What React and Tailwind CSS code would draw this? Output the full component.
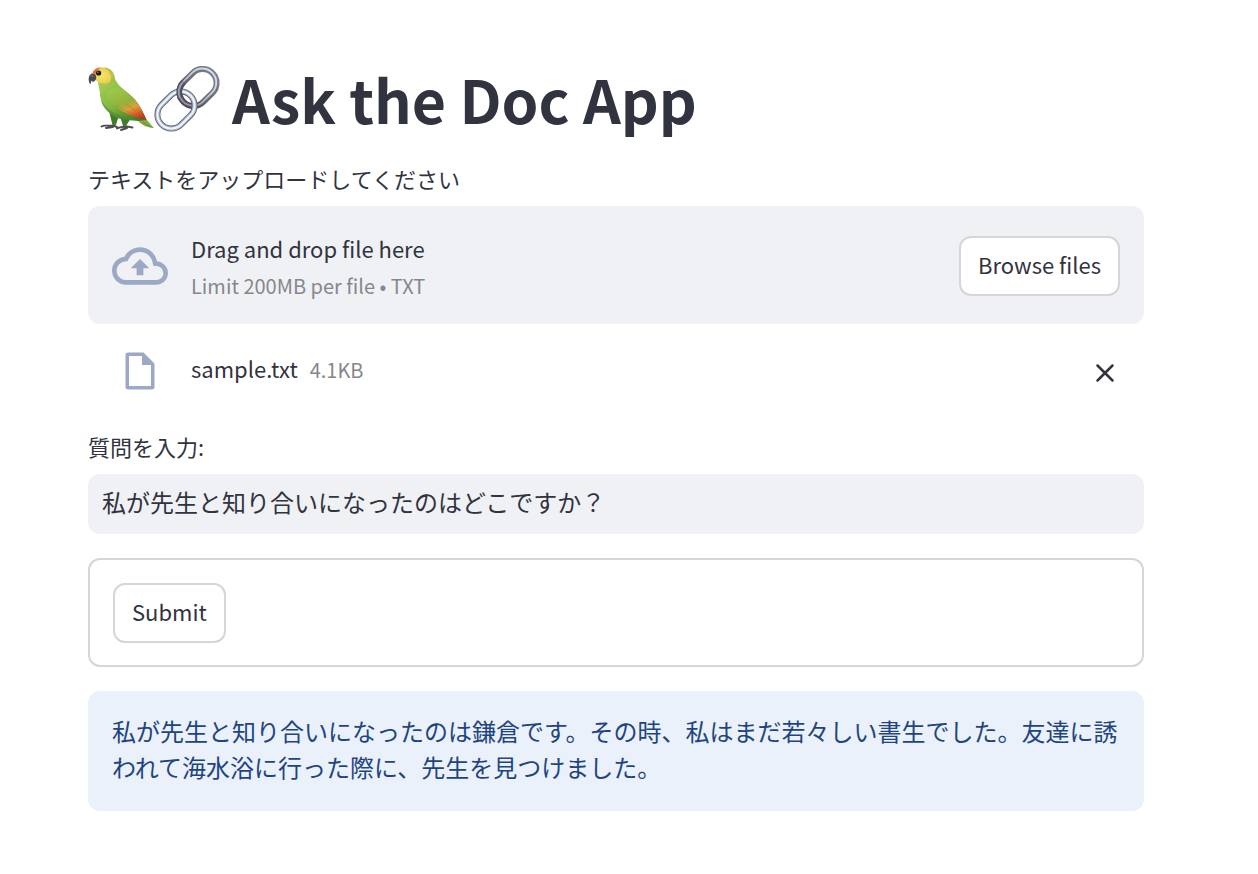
import { useRef, useState } from 'react'
import { MdOutlineCloudUpload } from 'react-icons/md'

const ANSWER =
  '私が先生と知り合いになったのは鎌倉です。その時、私はまだ若々しい書生でした。友達に誘われて海水浴に行った際に、先生を見つけました。'

function ParrotIcon() {
  return (
    <svg viewBox="0 0 66 66" className="size-[66px] shrink-0" aria-hidden="true">
      <defs>
        <linearGradient id="parrotBody" x1="0.1" y1="0.1" x2="0.8" y2="1">
          <stop offset="0" stopColor="#a5cd55" />
          <stop offset="0.5" stopColor="#80b840" />
          <stop offset="1" stopColor="#3f7a26" />
        </linearGradient>
        <linearGradient id="parrotWing" x1="0.2" y1="0" x2="0.75" y2="1">
          <stop offset="0" stopColor="#9acb4c" />
          <stop offset="0.45" stopColor="#93b23c" />
          <stop offset="0.66" stopColor="#d9a03a" />
          <stop offset="0.85" stopColor="#dc5a2a" />
          <stop offset="1" stopColor="#b03a1e" />
        </linearGradient>
        <radialGradient id="parrotHead" cx="0.45" cy="0.5" r="0.65">
          <stop offset="0" stopColor="#f6e36a" />
          <stop offset="0.7" stopColor="#e9d050" />
          <stop offset="1" stopColor="#b9bf42" />
        </radialGradient>
      </defs>
      {/* tail */}
      <path d="M49 50 L58 53 C61 56 63 59 66 62 C61 62 55 60 50 55 Z" fill="#86ad45" />
      <path d="M54 56 L63 61" stroke="#557f30" strokeWidth="0.7" />
      {/* legs */}
      <path
        d="M13.5 60.5 C16 58.5 20 60.5 25 59.5 L29 61 M18 62 L25 61 M29 62.5 C32 60.5 35 61 39 60.5 L44.5 61.5 M33 64 L39 62"
        fill="none"
        stroke="#4d4c50"
        strokeWidth="1.9"
        strokeLinecap="round"
      />
      <path d="M21 45 L31 49 L28 59 L24.5 59 Z M32 50 L43 52 L38 60 L35 60 Z" fill="#437c29" />
      {/* body */}
      <path
        d="M10 15 C10 20 12 23 12 29 C13 38 18 44 24 49 C31 54 40 53 50 55 L58.5 54 C54 43 50 36 43.5 30 C36 23 29 20 26 10 Z"
        fill="url(#parrotBody)"
      />
      <path d="M13 34 C18 43 25 48 38 51 C42 52 46 53 50 55 C40 54 31 55 24 49 C18 44 14 40 13 34 Z" fill="#4a8b2e" opacity="0.65" />
      <path
        d="M19 27 C24 20 34 21 42 29 C50 36 54 44 58.5 54 C45 51 33 46 26 39 C21 35 17 31 19 27 Z"
        fill="url(#parrotWing)"
      />
      <path d="M28 39 C37 46 46 49 55 51.5 M38 38 C44 42 50 47 55 51" fill="none" stroke="#b04f22" strokeWidth="0.7" opacity="0.45" />
      {/* head */}
      <path d="M4 8 C6 3 11 1 16 1.5 C22 2 26 6 26 12 C24 17 18 19 12 17 L7 14 Z" fill="url(#parrotHead)" />
      <path d="M16 1.5 C23 2 27 6 27 14 C25 18 22 19 21 18 C25 12 23 5 16 1.5 Z" fill="#a6b945" opacity="0.7" />
      <path d="M4.5 7 C5.5 3.5 9 1.5 13 1.5 C10 3 8.5 5 8 8 Z" fill="#e46a3c" />
      {/* beak */}
      <path d="M3.5 7.5 C7 7 8.5 9 8.2 12 C8 14 6.5 15.5 5 16 L3.5 14.5 L2.3 18.5 C0 15 0 9.5 3.5 7.5 Z" fill="#4a4b50" />
      <path d="M2.5 10 C3.5 9 5 9 5 11" fill="none" stroke="#85878c" strokeWidth="0.9" />
      <circle cx="10.6" cy="7" r="2.6" fill="#1c1714" />
      <circle cx="9.9" cy="6.2" r="0.6" fill="#d8d4c8" />
    </svg>
  )
}

function LinkIcon() {
  return (
    <svg viewBox="0 0 66 66" className="size-[66px] shrink-0" aria-hidden="true">
      <defs>
        <linearGradient id="ringDark" x1="0" y1="0" x2="1" y2="0">
          <stop offset="0" stopColor="#54474d" />
          <stop offset="0.5" stopColor="#6d6970" />
          <stop offset="1" stopColor="#7b7f8a" />
        </linearGradient>
        <linearGradient id="ringLight" x1="0" y1="0" x2="1" y2="0">
          <stop offset="0" stopColor="#8396b5" />
          <stop offset="0.5" stopColor="#b0c0d6" />
          <stop offset="1" stopColor="#d5e0ee" />
        </linearGradient>
      </defs>
      {/* upper ring */}
      <g transform="rotate(-45 44 21.5)" fill="none">
        <rect x="23.5" y="7.5" width="41" height="28" rx="14" stroke="url(#ringDark)" strokeWidth="6" />
        <rect x="23.5" y="7" width="41" height="28" rx="14" stroke="url(#ringLight)" strokeWidth="2" />
      </g>
      {/* lower ring */}
      <g transform="rotate(-45 22 44)" fill="none">
        <rect x="1.5" y="30" width="41" height="28" rx="14" stroke="#6b6168" strokeWidth="6" />
        <rect x="1.5" y="30" width="41" height="28" rx="14" stroke="#a3b6d0" strokeWidth="4.2" />
        <rect x="1.5" y="30" width="41" height="28" rx="14" stroke="#f1f6fc" strokeWidth="2" />
      </g>
      {/* the upper ring crosses in front here */}
      <path d="M29.5 16.2 A14 14 0 0 0 26.5 32" fill="none" stroke="#574d55" strokeWidth="6" />
      <path d="M29 16 A14 14 0 0 0 26 32" fill="none" stroke="#8da2c4" strokeWidth="2" />
    </svg>
  )
}

function FileIcon() {
  return (
    <svg viewBox="0 0 30 38" className="h-[38px] w-[30px]" aria-hidden="true">
      <path
        fill="#9ba8c6"
        fillRule="evenodd"
        d="M3 0.5 H18.5 L29.5 11.5 V35 Q29.5 37.5 27 37.5 H3 Q0.5 37.5 0.5 35 V3 Q0.5 0.5 3 0.5 Z M4 4 V34 H26 V13 H17 V4 Z"
      />
    </svg>
  )
}

export default function App() {
  const fileInput = useRef(null)
  const [fileName, setFileName] = useState('sample.txt')
  const [question, setQuestion] = useState('私が先生と知り合いになったのはどこですか？')
  const [answer, setAnswer] = useState(ANSWER)

  const handleFileChange = (e) => {
    const selectedFile = e.target.files[0]
    if (selectedFile) {
      setFileName(selectedFile.name)
    }
  }

  const handleSubmit = (e) => {
    e.preventDefault()
    setAnswer(ANSWER)
  }

  return (
    <main
      lang="ja"
      className="bg-white pt-[60px] pr-[114px] pb-16 pl-[88px] font-['Noto_Sans_CJK_JP',sans-serif] text-[#31333f]"
    >
      <h1 className="mb-6 flex h-[78px] items-center text-[59px] leading-[78px] font-bold">
        <ParrotIcon />
        <LinkIcon />
        <span className="ml-3">Ask the Doc App</span>
      </h1>

      <label htmlFor="file" className="mb-3 block text-[22px] leading-8">
        テキストをアップロードしてください
      </label>
      <section className="flex items-center rounded-xl bg-[#f0f1f5] px-6 pt-5 pb-[18px]">
        <MdOutlineCloudUpload className="mr-[23px] size-14 shrink-0 text-[#9ba8c6]" />
        <div className="flex-1 pt-1">
          <p className="text-[22px] leading-9">Drag and drop file here</p>
          <p className="text-[20px] leading-10 text-[#86878b]">Limit 200MB per file • TXT</p>
        </div>
        <input id="file" ref={fileInput} type="file" accept=".txt" onChange={handleFileChange} className="hidden" />
        <button
          type="button"
          onClick={() => fileInput.current.click()}
          className="h-[60px] rounded-xl border-2 border-[#d6d6d9] bg-white px-[17px] pb-1 text-[22px]"
        >
          Browse files
        </button>
      </section>

      <div className="mb-3 flex h-[94px] items-center px-6">
        <div className="mr-[23px] flex w-14 shrink-0 justify-center">
          <FileIcon />
        </div>
        <div className="flex flex-1 items-baseline gap-3 pb-1.5">
          <span className="text-[22px]">{fileName}</span>
          <span className="text-[20px] text-[#86878b]">4.1KB</span>
        </div>
        <button type="button" aria-label="Remove file" onClick={() => setFileName('')} className="px-[5px] pt-1">
          <svg viewBox="0 0 20 20" className="size-5" aria-hidden="true">
            <path d="M2.5 2.5 L17.5 17.5 M17.5 2.5 L2.5 17.5" stroke="#31333f" strokeWidth="2.5" strokeLinecap="round" />
          </svg>
        </button>
      </div>

      <form onSubmit={handleSubmit}>
        <label htmlFor="question" className="mb-3 block text-[22px] leading-8">
          質問を入力:
        </label>
        <input
          id="question"
          type="text"
          value={question}
          onChange={(e) => setQuestion(e.target.value)}
          className="h-[60px] w-full rounded-xl bg-[#f0f1f5] px-[14px] pb-1.5 text-2xl outline-none"
        />
        <div className="mt-6 rounded-xl border-2 border-[#d6d6d9] px-[23px] pt-[23px] pb-[22px]">
          <button type="submit" className="h-[60px] rounded-xl border-2 border-[#d6d6d9] bg-white px-[17px] pb-1 text-[22px]">
            Submit
          </button>
        </div>
      </form>

      <div className="mt-6 rounded-xl bg-[#eaf1fb] px-6 pt-[22px] pb-[26px] text-2xl leading-9 text-[#1f4580]">
        <p>{answer}</p>
      </div>
    </main>
  )
}
